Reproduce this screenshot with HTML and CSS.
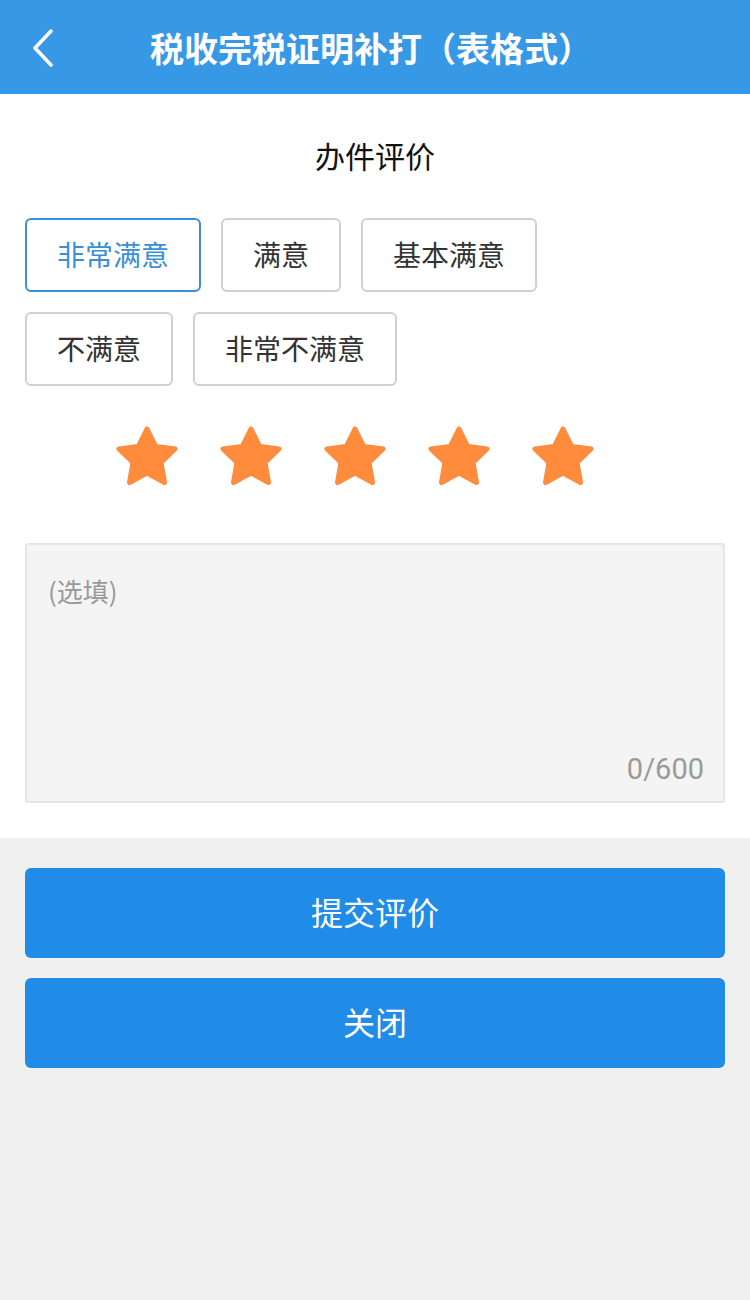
FILE: index.html
```html
<!DOCTYPE HTML>
<html lang="zh-CN">
<head>
	<meta charset="UTF-8">
	<title>税收完税证明补打（表格式）</title>
	<link rel="stylesheet" href="styles.css">
</head>
<body>
	<div class="topbar">
		<a class="back">
			<svg width="24" height="38" viewBox="0 0 24 38"><path d="M20 2 L4 19 L20 36" fill="none" stroke="#fff" stroke-width="3.5" stroke-linecap="round" stroke-linejoin="round"/></svg>
		</a>
		<h1 class="title">税收完税证明补打（表格式）</h1>
	</div>

	<div class="eval">
		<div class="eval-head">办件评价</div>
		<ul class="levels">
			<li class="actual">非常满意</li>
			<li>满意</li>
			<li>基本满意</li>
			<li>不满意</li>
			<li>非常不满意</li>
		</ul>
		<div class="stars">
			<svg class="star" viewBox="0 0 64 62"><path d="M32 3 L40.8 20.5 L60 23 L46 36.5 L49.5 56.5 L32 47 L14.5 56.5 L18 36.5 L4 23 L23.2 20.5 Z"/></svg>
			<svg class="star" viewBox="0 0 64 62"><path d="M32 3 L40.8 20.5 L60 23 L46 36.5 L49.5 56.5 L32 47 L14.5 56.5 L18 36.5 L4 23 L23.2 20.5 Z"/></svg>
			<svg class="star" viewBox="0 0 64 62"><path d="M32 3 L40.8 20.5 L60 23 L46 36.5 L49.5 56.5 L32 47 L14.5 56.5 L18 36.5 L4 23 L23.2 20.5 Z"/></svg>
			<svg class="star" viewBox="0 0 64 62"><path d="M32 3 L40.8 20.5 L60 23 L46 36.5 L49.5 56.5 L32 47 L14.5 56.5 L18 36.5 L4 23 L23.2 20.5 Z"/></svg>
			<svg class="star" viewBox="0 0 64 62"><path d="M32 3 L40.8 20.5 L60 23 L46 36.5 L49.5 56.5 L32 47 L14.5 56.5 L18 36.5 L4 23 L23.2 20.5 Z"/></svg>
		</div>
		<div class="memo">
			<div class="memo-hint">(选填)</div>
			<div class="memo-count">0/600</div>
		</div>
	</div>

	<div class="actions">
		<a class="btn">提交评价</a>
		<a class="btn">关闭</a>
	</div>
</body>
</html>
```

FILE: styles.css
```css
/* base */
html, body {
margin: 0;
padding: 0;
}
body {
width: 750px;
min-height: 1300px;
background: #f0f0f0;
font-family: "Noto Sans CJK SC", "Noto Sans", sans-serif;
}

/* barra superior */
.topbar {
position: relative;
height: 94px;
background: #3799e6;
display: flex;
align-items: center;
justify-content: center;
}
.back {
position: absolute;
left: 31px;
top: 29px;
display: block;
}
.title {
margin: 0 0 0 -8px;
font-size: 34px;
font-weight: bold;
color: #fff;
}

/* panel de evaluación */
.eval {
background: #fff;
padding: 30px 25px 35px;
}
.eval-head {
text-align: center;
font-size: 30px;
color: #111;
line-height: 62px;
}
.levels {
list-style: none;
margin: 32px 0 0;
padding: 0;
display: flex;
flex-wrap: wrap;
gap: 20px;
width: 560px;
}
.levels > li {
height: 70px;
line-height: 68px;
padding: 0 30px;
border: 2px solid #d0d0d0;
border-radius: 6px;
font-size: 28px;
color: #333;
}
.levels > .actual {
border-color: #3a8fd9;
color: #3a8fd9;
}

.stars {
display: flex;
gap: 40px;
padding: 40px 0 0 90px;
}
.star {
width: 64px;
height: 62px;
fill: #ff8b3d;
stroke: #ff8b3d;
stroke-width: 5;
stroke-linejoin: round;
}

.memo {
margin-top: 55px;
height: 260px;
background: #f4f4f4;
border: 2px solid #e6e6e6;
border-radius: 3px;
display: flex;
flex-direction: column;
justify-content: space-between;
padding: 24px 19px 10px 21px;
box-sizing: border-box;
}
.memo-hint {
font-size: 26px;
color: #999;
line-height: 44px;
}
.memo-count {
text-align: right;
font-family: "Roboto", "Noto Sans", sans-serif;
font-size: 29px;
color: #9a9a9a;
line-height: 44px;
}

/* botones */
.actions {
padding: 30px 25px;
display: flex;
flex-direction: column;
gap: 20px;
}
.btn {
display: block;
height: 90px;
line-height: 86px;
background: #208ce8;
border-radius: 6px;
text-align: center;
font-size: 32px;
color: #fff;
}
```
